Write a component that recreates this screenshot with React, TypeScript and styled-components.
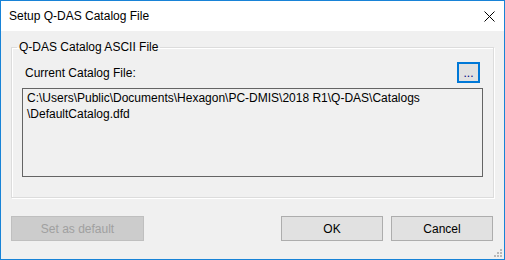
import React from "react";
import styled, { createGlobalStyle } from "styled-components";

const Global = createGlobalStyle`
  html, body { margin: 0; padding: 0; background: #ffffff; }
  * { box-sizing: border-box; }
`;

const Window = styled.div`
  width: 505px;
  height: 260px;
  border: 1px solid #1883d7;
  display: flex;
  flex-direction: column;
  font-family: "Liberation Sans", Arial, sans-serif;
  font-size: 12px;
  color: #000;
`;

const TitleBar = styled.div`
  height: 30px;
  background: #ffffff;
  display: flex;
  align-items: center;
  justify-content: space-between;
  padding-left: 8px;
  padding-right: 9px;
`;

const Title = styled.span`
  font-size: 12px;
  color: #000;
`;

const CloseBtn = styled.div`
  width: 12px;
  height: 12px;
  display: flex;
  align-items: center;
  justify-content: center;
`;

const Body = styled.div`
  flex: 1;
  background: #f0f0f0;
  padding: 9px 10px 0 10px;
  display: flex;
  flex-direction: column;
  position: relative;
`;

const Group = styled.fieldset`
  margin: 0;
  padding: 8px 10px 20px 10px;
  border: 1px solid #dcdcdc;
  box-shadow: inset 1px 1px 0 #ffffff, 1px 1px 0 #ffffff;
  display: flex;
  flex-direction: column;
  gap: 5px;
`;

const Legend = styled.legend`
  margin-left: -5px;
  padding: 0 2px;
  line-height: 14px;
  color: #000;
`;

const FileRow = styled.div`
  display: flex;
  align-items: center;
  justify-content: space-between;
  height: 21px;
  padding-left: 3px;
  padding-right: 3px;
`;

const Label = styled.span`
  color: #000;
`;

const BrowseBtn = styled.button`
  width: 23px;
  height: 21px;
  padding: 0;
  border: 2px solid #0078d7;
  background: #e1e1e1;
  color: #000080;
  font-family: inherit;
  font-size: 12px;
  line-height: 14px;
  display: flex;
  align-items: center;
  justify-content: center;
`;

const PathBox = styled.div`
  height: 89px;
  border: 1px solid #646464;
  background: #f0f0f0;
  padding: 1px 4px;
  line-height: 16px;
  color: #000;
`;

const ButtonRow = styled.div`
  margin-top: 18px;
  display: flex;
  align-items: center;
  padding-right: 1px;
`;

const Button = styled.button<{ $w: number; $disabled?: boolean }>`
  width: ${(p) => p.$w}px;
  height: 25px;
  padding: 0;
  font-family: inherit;
  font-size: 12px;
  border: 1px solid ${(p) => (p.$disabled ? "#bfbfbf" : "#adadad")};
  background: ${(p) => (p.$disabled ? "#cccccc" : "#e1e1e1")};
  color: ${(p) => (p.$disabled ? "#a0a0a0" : "#000")};
`;

const Spacer = styled.div`
  flex: 1;
`;

const Gap = styled.div`
  width: 8px;
`;

const Grip = styled.svg`
  position: absolute;
  right: 1px;
  bottom: 1px;
`;

export default function App() {
  return (
    <>
      <Global />
      <Window>
        <TitleBar>
          <Title>Setup Q-DAS Catalog File</Title>
          <CloseBtn>
            <svg width="11" height="11" viewBox="0 0 11 11">
              <path d="M0.5 0.5 L10.5 10.5 M10.5 0.5 L0.5 10.5" stroke="#000" strokeWidth="1" />
            </svg>
          </CloseBtn>
        </TitleBar>
        <Body>
          <Group>
            <Legend>Q-DAS Catalog ASCII File</Legend>
            <FileRow>
              <Label>Current Catalog File:</Label>
              <BrowseBtn>...</BrowseBtn>
            </FileRow>
            <PathBox>
              C:\Users\Public\Documents\Hexagon\PC-DMIS\2018 R1\Q-DAS\Catalogs
              <br />
              \DefaultCatalog.dfd
            </PathBox>
          </Group>
          <ButtonRow>
            <Button $w={133} $disabled>Set as default</Button>
            <Spacer />
            <Button $w={102}>OK</Button>
            <Gap />
            <Button $w={102}>Cancel</Button>
          </ButtonRow>
          <Grip width="9" height="9" viewBox="0 0 9 9">
            <rect x="6" y="0" width="2" height="2" fill="#b8b8b8" />
            <rect x="3" y="3" width="2" height="2" fill="#b8b8b8" />
            <rect x="6" y="3" width="2" height="2" fill="#b8b8b8" />
            <rect x="0" y="6" width="2" height="2" fill="#b8b8b8" />
            <rect x="3" y="6" width="2" height="2" fill="#b8b8b8" />
            <rect x="6" y="6" width="2" height="2" fill="#b8b8b8" />
          </Grip>
        </Body>
      </Window>
    </>
  );
}
